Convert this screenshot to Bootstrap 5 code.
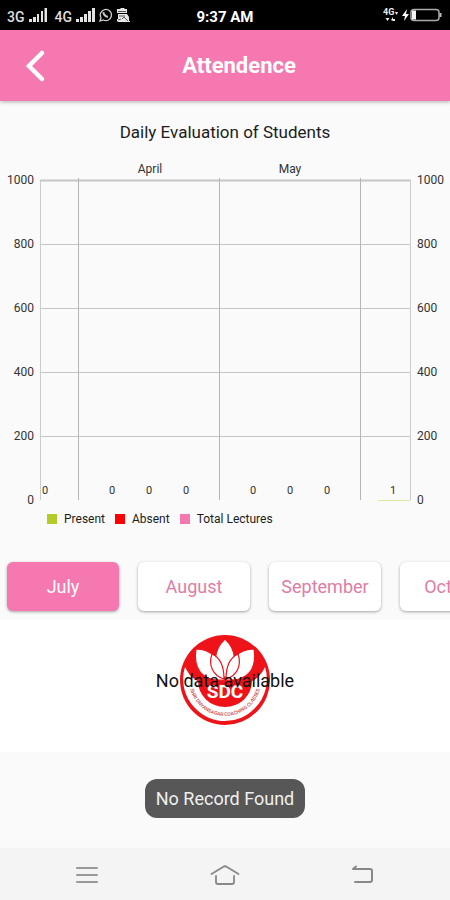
<!DOCTYPE html>
<html lang="en">
<head>
<meta charset="utf-8">
<meta name="viewport" content="width=device-width, initial-scale=1">
<title>Attendence</title>
<link href="https://cdn.jsdelivr.net/npm/bootstrap@5.3.0/dist/css/bootstrap.min.css" rel="stylesheet">
<style>
  :root { --pink: #f578b0; --ink: #1c1c1c; }
  body { font-family: Roboto, "Liberation Sans", sans-serif; background: #fafafa; color: var(--ink); }
  svg { display: block; }
  .status-bar { background: #000; color: #fff; height: 30px; font-size: 14px; padding: 0 7px; }
  .status-side { flex: 1 1 0; }
  .status-net { color: #dedede; font-weight: 500; }
  .clock { font-size: 15px; font-weight: 700; }
  .app-bar { background: var(--pink); color: #fff; height: 71px; padding: 2px 22px 0; box-shadow: 0 1px 4px rgba(0,0,0,.3); }
  .app-title { font-size: 22px; font-weight: 700; }
  .back-btn { width: 28px; }
  .chart-title { font-size: 17px; line-height: 20px; padding: 21px 0 8px; }
  .chart { width: 100%; height: auto; font-size: 12px; fill: #333; }
  .chart .bar-value { font-size: 11px; }
  .legend { font-size: 12px; line-height: 16px; padding-left: 47px; gap: 10px; }
  .legend-item { gap: 7px; }
  .swatch { width: 10px; height: 10px; }
  .sw-present { background: #b5cc28; }
  .sw-absent { background: #f00; }
  .sw-total { background: var(--pink); }
  .months { gap: 19px; padding: 35px 7px 9px; overflow: hidden; }
  .month-btn { flex: 0 0 auto; width: 112px; height: 49px; background: #fff; color: #e07ca5; font-size: 18px; border: 0; border-radius: 6px; padding: 0; box-shadow: 0 1px 3px rgba(0,0,0,.35); }
  .month-btn.active, .month-btn:hover { background: var(--pink); color: #fff; }
  .month-btn:not(.active):hover { background: #fdeaf3; color: #e07ca5; }
  .result-panel { background: #fff; height: 132px; padding-top: 14px; }
  .seal-wrap { width: 90px; height: 92px; }
  .no-data { font-size: 18px; white-space: nowrap; color: #111; }
  .snack { background: #575757; color: #f0f0f0; font-size: 18px; line-height: 22px; padding: 9px 11px 8px; border-radius: 12px; margin-top: 27px; }
  .nav-keys { background: #f4f4f4; height: 52px; padding: 2px 20px 0; }
</style>
</head>
<body class="d-flex flex-column min-vh-100">

<div class="status-bar d-flex align-items-center">
  <div class="status-side status-net d-flex align-items-center">
    <span class="pt-1">3G</span>
    <svg class="ms-1 me-2" width="18" height="16" viewBox="0 0 18 16" fill="#e4e4e4" aria-hidden="true"><path d="M0 12h3v3H0zM4 10h3v5H4zM8 7h2v8H8zM12 4h2v11h-2zM15.500 1h2.500v14h-2.500z"/></svg>
    <span class="pt-1">4G</span>
    <svg class="ms-1" width="19" height="16" viewBox="0 0 19 16" fill="#e4e4e4" aria-hidden="true"><path d="M0 12h3v3H0zM4 10h3v5H4zM8 7h3v8H8zM12 4h3v11h-3zM16 1h3v14h-3z"/></svg>
    <svg class="ms-1 me-1" width="13" height="14" viewBox="0 0 13 14" fill="none" stroke="#ccc" aria-hidden="true"><path d="M1 13l1-3.200A5.600 5.600 0 1 1 4.300 12z" stroke-width="1.300"/><path d="M4.500 4.200c-.3 2 2 4.700 4.500 4.600" stroke-width="2"/></svg>
    <svg width="14" height="15" viewBox="0 0 14 15" fill="#e6e6e6" aria-hidden="true"><path d="M4 1l1-1h3l1 1h2v4H1V1zM2 6h9l2 3v4h1v1H2l-1-1v-2h1z"/><path d="M2 3.500h8M3 8h6M6 11l2-2 4 4M2 12l3-1" fill="none" stroke="#555"/></svg>
  </div>
  <div class="clock pt-1">9:37 AM</div>
  <div class="status-side d-flex align-items-center justify-content-end">
    <svg width="15" height="16" viewBox="0 0 15 16" fill="#eee" aria-hidden="true"><text x="0" y="8" font-size="9" font-weight="700">4G</text><path d="M12 5h3l-1.500 3zM2.500 11h4l-2 3zM8 13l2-3v4zM10 12h2v2h-2z"/></svg>
    <svg class="ms-1" width="41" height="14" viewBox="0 0 41 14" aria-hidden="true"><path d="M5 1L0 8h3l-1 5 5-7H4z" fill="#fff"/><rect x="9" y="1.500" width="28" height="11" rx="3" fill="none" stroke="#aaa" stroke-width="1.500"/><path d="M10 2.500h4v9h-4z" fill="#f4f4f4"/><path d="M38.500 5v4" stroke="#bbb" stroke-width="2"/></svg>
  </div>
</div>

<header class="app-bar d-flex align-items-center">
  <button class="btn p-0 border-0 back-btn" type="button" aria-label="Back">
    <svg width="28" height="36" viewBox="0 0 28 36" fill="none" stroke="#fff" stroke-width="4.500" stroke-linecap="round" stroke-linejoin="miter" aria-hidden="true"><path d="M20 4L7 17l13 13"/></svg>
  </button>
  <h1 class="app-title flex-fill text-center m-0">Attendence</h1>
</header>

<main class="flex-fill">
  <h2 class="chart-title text-center m-0 fw-normal">Daily Evaluation of Students</h2>

  <svg class="chart" viewBox="0 0 450 361" role="img" aria-label="Lectures per month">
    <g fill="none" stroke="#c6c6c6">
      <path d="M40 94.500H411M40 158.500H411M40 222.500H411M40 286.500H411"/>
      <path d="M40 30.500H411" stroke-width="2"/>
      <path d="M40.500 30V350M410.500 30V350" stroke="#ccc"/>
      <path d="M78.500 28V350M219.500 28V350M360.500 28V350" stroke="#b5b5b5"/>
      <path d="M378 350.500H410" stroke="#dfe69a"/>
    </g>
    <g text-anchor="middle"><text x="150" y="23">April</text><text x="290" y="23">May</text></g>
    <g text-anchor="end">
      <text x="34" y="34">1000</text><text x="34" y="98">800</text><text x="34" y="162">600</text>
      <text x="34" y="226">400</text><text x="34" y="290">200</text><text x="34" y="354">0</text>
    </g>
    <g>
      <text x="417" y="34">1000</text><text x="417" y="98">800</text><text x="417" y="162">600</text>
      <text x="417" y="226">400</text><text x="417" y="290">200</text><text x="417" y="354">0</text>
    </g>
    <g class="bar-value" text-anchor="middle">
      <text x="45" y="344">0</text><text x="112" y="344">0</text><text x="149" y="344">0</text><text x="186" y="344">0</text>
      <text x="253" y="344">0</text><text x="290" y="344">0</text><text x="327" y="344">0</text><text x="393" y="344">1</text>
    </g>
  </svg>

  <div class="legend d-flex">
    <span class="legend-item d-flex align-items-center"><i class="swatch sw-present"></i>Present</span>
    <span class="legend-item d-flex align-items-center"><i class="swatch sw-absent"></i>Absent</span>
    <span class="legend-item d-flex align-items-center"><i class="swatch sw-total"></i>Total Lectures</span>
  </div>

  <div class="months d-flex">
    <button type="button" class="month-btn active">July</button>
    <button type="button" class="month-btn">August</button>
    <button type="button" class="month-btn">September</button>
    <button type="button" class="month-btn">October</button>
  </div>

  <section class="result-panel">
    <div class="seal-wrap position-relative mx-auto">
      <svg width="90" height="92" viewBox="-45 -46 90 92" role="img" aria-label="SDC logo">
        <circle r="45" fill="#ee1219"/>
        <path d="M-40 -13C-36-5-32-1-27 1A27 26 0 0 0 27 1C32-1 36-5 40-13A41 41 0 0 1 30 28A41 41 0 0 1-30 28A41 41 0 0 1-40-13Z" fill="#fff"/>
        <g fill="#fff" stroke="#ee1219" stroke-width="1.200" stroke-linejoin="round">
          <path d="M0 0C-24 2-32-12-29-31-14-31-2-20 0 0Z"/>
          <path d="M0 0C24 2 32-12 29-31 14-31 2-20 0 0Z"/>
          <path d="M0-2C-14-14-11-31 0-41 11-31 14-14 0-2Z"/>
          <path d="M-1-1C-12-4-17-15-13-26-4-22-1-11-1-1Z"/>
          <path d="M1-1C12-4 17-15 13-26 4-22 1-11 1-1Z"/>
        </g>
        <text x="0" y="18" text-anchor="middle" font-size="19" font-weight="700" fill="#fff">SDC</text>
        <path id="ring" d="M-36 0A36 36 0 0 0 36 0" fill="none"/>
        <text font-size="5" font-weight="500" fill="#c8484c" text-anchor="middle"><textPath href="#ring" startOffset="50%">SHRI DNYANSAGAR COACHING CLASSES</textPath></text>
      </svg>
      <span class="no-data position-absolute top-50 start-50 translate-middle">No data available</span>
    </div>
  </section>

  <div class="d-flex justify-content-center">
    <div class="snack" role="status">No Record Found</div>
  </div>
</main>

<nav class="nav-keys d-flex justify-content-around align-items-center" aria-label="System">
  <button class="btn p-0 border-0" type="button" aria-label="Recent apps">
    <svg width="24" height="20" viewBox="0 0 24 20" fill="none" stroke="#999" stroke-width="2" stroke-linecap="round" aria-hidden="true"><path d="M2 3h20M2 10h20M2 17h20"/></svg>
  </button>
  <button class="btn p-0 border-0" type="button" aria-label="Home">
    <svg width="30" height="22" viewBox="0 0 30 22" fill="none" stroke="#888" stroke-width="1.800" stroke-linecap="round" stroke-linejoin="round" aria-hidden="true"><path d="M1.500 10L13 3Q15 1.500 17 3L28.500 10M6 12v6q0 2 2 2h14q2 0 2-2v-6"/></svg>
  </button>
  <button class="btn p-0 border-0" type="button" aria-label="Back">
    <svg width="24" height="20" viewBox="0 0 24 20" fill="none" stroke="#888" stroke-width="2" stroke-linecap="round" stroke-linejoin="round" aria-hidden="true"><path d="M5 1.500L2 4H19q2 0 2 2v9q0 2-2 2H4"/></svg>
  </button>
</nav>
<script src="https://cdn.jsdelivr.net/npm/bootstrap@5.3.0/dist/js/bootstrap.bundle.min.js"></script>
</body>
</html>
